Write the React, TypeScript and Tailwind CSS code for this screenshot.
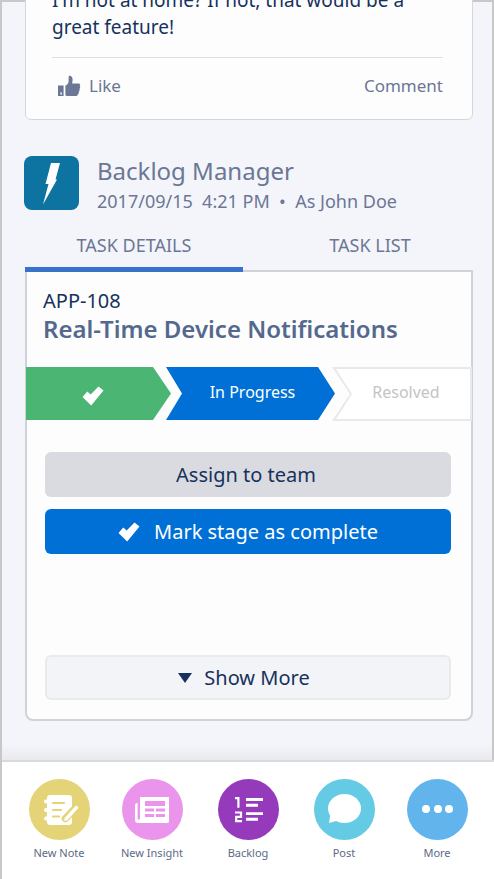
import type { ReactNode } from "react";

function CheckIcon() {
  return (
    <svg viewBox="0 0 22 20" className="h-5 w-[22px]" fill="currentColor" aria-hidden="true">
      <path d="M.5 11 5.300 5.600 8.700 8.600 16.500.500 21.500 4.600 9.200 19.600Z" />
    </svg>
  );
}

function ThumbIcon() {
  return (
    <svg viewBox="0 0 24 22" className="h-[22px] w-6" fill="currentColor" aria-hidden="true">
      <path fillRule="evenodd" d="M1 10.6h5.6v10.5H1zM3.4 17.6v1.8h1.5v-1.8z" />
      <path d="M8.4 10.6c1.8-.4 3.2-2 3.2-4.3V3.2c0-2.6 1-2.6 2.2-2.1 2 .9 2.2 3.4 1.3 7.3h6.2c2 0 2.4 1.6 1.4 2.7.8 1 .6 2.2-.3 2.8.5 1.2.2 2.200-.7 2.800.3 1.200 0 2-.8 2.600-.1 1.200-1 1.800-2.300 1.800h-7.200c-1.600 0-2.300-.4-3-.9z" />
    </svg>
  );
}

function NoteIcon() {
  return (
    <svg viewBox="0 0 61 61" className="size-full" aria-hidden="true">
      <rect x="18" y="16" width="25" height="30" rx="3" fill="#fff" />
      <path d="M17 22.500h3M17 31h3M17 39.500h3" stroke="#fff" strokeWidth="4" strokeLinecap="round" />
      <path d="M24 24h11M24 31h8M24 37.500h6" stroke="#e5d378" strokeWidth="2.200" strokeLinecap="round" />
      <path d="M46.500 29 36.500 39.500" stroke="#e5d378" strokeWidth="7.500" strokeLinecap="round" />
      <path d="M47.500 28.500 37.500 39.500" stroke="#fff" strokeWidth="3.400" strokeLinecap="round" />
      <path d="M35.800 38 35.200 42l4-1z" fill="#fff" />
    </svg>
  );
}

function NewsIcon() {
  return (
    <svg viewBox="0 0 61 61" className="size-full" aria-hidden="true">
      <path d="M18 18h29v24c0 1.500-.5 2-2 2H16c-2 0-3-1-3-3V26c0-1.300 1-2 2.600-2v15.500c0 1.500 2.400 1.500 2.400 0z" fill="#fff" />
      <path d="M23 22h20v5H23zM23 29.500h9v3h-9zM34 29.500h9v3h-9zM23 35h9v3h-9zM34 35h9v3h-9z" fill="#eb94ec" />
    </svg>
  );
}

function BacklogIcon() {
  return (
    <svg viewBox="0 0 61 61" className="size-full" aria-hidden="true">
      <g fill="none" stroke="#fff">
        <path d="M17 19.200h3.400v9.500" strokeWidth="2.200" />
        <path d="M17 33.500h6v4.300h-4.800v4.400h5.800" strokeWidth="2.200" />
        <path d="M28 20.500h17M28 26.200h12M28 34.600h17M28 40.300h12" strokeWidth="2.900" />
      </g>
    </svg>
  );
}

function PostIcon() {
  return (
    <svg viewBox="0 0 61 61" className="size-full" fill="#fff" aria-hidden="true">
      <ellipse cx="30.500" cy="29.500" rx="16.500" ry="14.500" />
      <path d="M16.500 35 15 44l8-2.300z" />
    </svg>
  );
}

function MoreIcon() {
  return (
    <svg viewBox="0 0 61 61" className="size-full" fill="#fff" aria-hidden="true">
      <circle cx="19" cy="30" r="4" />
      <circle cx="31" cy="30" r="4" />
      <circle cx="42" cy="30" r="4" />
    </svg>
  );
}

function NavItem({ label, color, children }: { label: string; color: string; children: ReactNode }) {
  return (
    <button type="button" className="flex flex-col items-center">
      <span className={`size-[61px] rounded-full ${color}`}>{children}</span>
      <span className="mt-1 text-[11px] leading-[18px] text-[#5c6a88]">{label}</span>
    </button>
  );
}

export default function App() {
  return (
    <div className="flex min-h-screen flex-col overflow-hidden border-l-2 border-[#c8c8c8] bg-[#f4f5fa] font-['Noto_Sans','Open_Sans',sans-serif] text-[#6b7794]">
      <main className="flex flex-1 flex-col border-t-2 border-r-2 border-[#c8c8c8] pr-[19px] pl-[23px]">
        <article className="-mt-[41px] rounded-md border border-[#d4d6dc] bg-[#fdfdfd] pt-[25px] pr-[29px] pb-[17px] pl-[26px]">
          <p className="border-b border-[#dfdfe2] pb-4 text-[19px] leading-[27px] text-[#16325c]">
            I'm not at home? If not, that would be a great feature!
          </p>
          <div className="mt-3 flex h-8 items-center justify-between text-[17px]">
            <button type="button" className="flex items-center gap-2 pl-[5px]">
              <ThumbIcon />
              Like
            </button>
            <button type="button">Comment</button>
          </div>
        </article>

        <header className="mt-9 -ml-px flex gap-[18px]">
          <svg viewBox="0 0 55 54" className="h-[54px] w-[55px] shrink-0 rounded-lg bg-[#0d74a1]" aria-hidden="true">
            <path d="M27 7H36l-4.500 16.500H33L19 48.500 24.500 28h-3z" fill="#fff" />
          </svg>
          <div>
            <h1 className="text-2xl leading-[30px]">Backlog Manager</h1>
            <p className="text-lg leading-[30px] whitespace-pre">2017/09/15  4:21 PM  •  As John Doe</p>
          </div>
        </header>

        <div role="tablist" className="relative z-10 -mb-0.5 mt-2.5 grid grid-cols-[218fr_230fr] text-lg">
          <button type="button" role="tab" aria-selected="true" className="h-[46px] border-b-[5px] border-[#3a71ca] pb-1">
            TASK DETAILS
          </button>
          <button type="button" role="tab" aria-selected="false" className="h-[46px] pb-2 pl-6">
            TASK LIST
          </button>
        </div>

        <section className="rounded-b-lg border-2 border-[#d1d2d9] bg-[#fdfdfd] pb-[19px]">
          <div className="px-4 pt-[15px]">
            <p className="text-xl leading-7 text-[#16325c]">APP-108</p>
            <h2 className="text-2xl leading-7 font-semibold text-[#54698d]">Real-Time Device Notifications</h2>
          </div>

          <ol className="-mx-px mt-6 grid h-[54px] grid-cols-[145fr_164fr_137fr] text-[16px]">
            <li className="mb-px flex items-center justify-center bg-[#4bb573] pr-3 pt-1 text-white [clip-path:polygon(0_0,calc(100%-18px)_0,100%_50%,calc(100%-18px)_100%,0_100%)]">
              <CheckIcon />
            </li>
            <li className="mb-px -ml-[5px] flex items-center justify-center bg-[#0070d6] pb-1 pl-1 text-white [clip-path:polygon(0_0,calc(100%-17px)_0,100%_50%,calc(100%-17px)_100%,0_100%,16px_50%)]">
              In Progress
            </li>
            <li className="-ml-[3px] flex bg-[#e9e9eb] p-0.5 text-[#c4c4c6] [clip-path:polygon(0_0,100%_0,100%_100%,0_100%,18px_50%)]">
              <span className="flex flex-1 items-center justify-center bg-white pb-1 pl-2 [clip-path:polygon(2px_0,100%_0,100%_100%,2px_100%,18px_50%)]">
                Resolved
              </span>
            </li>
          </ol>

          <div className="mt-[31px] flex flex-col pr-5 pl-[18px] text-xl text-[#16325c]">
            <button type="button" className="h-[45px] rounded-md bg-[#dadbe0] pr-1">Assign to team</button>
            <button type="button" className="mt-3 flex h-[45px] items-center justify-center gap-3.5 rounded-md bg-[#0070d6] text-white">
              <CheckIcon />
              Mark stage as complete
            </button>
            <button type="button" className="mt-[101px] flex h-[45px] items-center justify-center gap-3 rounded-md border-2 border-[#e9eaec] bg-[#f3f4f8] pr-2">
              <svg viewBox="0 0 14 10" className="h-2.5 w-3.5" fill="currentColor" aria-hidden="true">
                <path d="M0 0h14L7 10z" />
              </svg>
              Show More
            </button>
          </div>
        </section>
        <div className="-mr-[19px] -ml-[23px] mt-auto h-4 bg-linear-to-b from-[#f4f5fa] to-[#e9eaee]" />
      </main>

      <nav className="grid h-[119px] grid-cols-[92fr_94fr_98fr_94fr_92fr] items-start border-t-2 border-[#d9d9df] bg-white px-[11px] pt-[17px]">
        <NavItem label="New Note" color="bg-[#e5d378]"><NoteIcon /></NavItem>
        <NavItem label="New Insight" color="bg-[#eb94ec]"><NewsIcon /></NavItem>
        <NavItem label="Backlog" color="bg-[#963abc]"><BacklogIcon /></NavItem>
        <NavItem label="Post" color="bg-[#65cae3]"><PostIcon /></NavItem>
        <NavItem label="More" color="bg-[#62b5ec]"><MoreIcon /></NavItem>
      </nav>
    </div>
  );
}
